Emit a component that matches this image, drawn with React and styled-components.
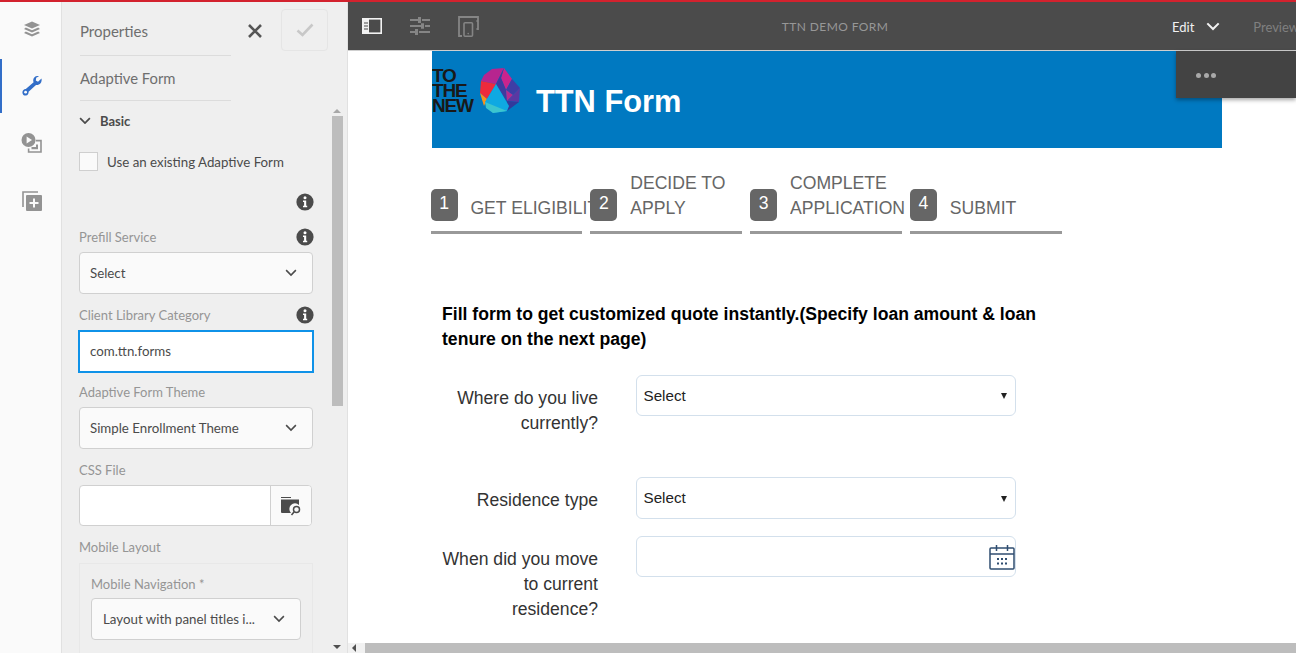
import React from "react";
import styled, { createGlobalStyle } from "styled-components";

const Global = createGlobalStyle`
  html, body { margin: 0; padding: 0; height: 100%; overflow: hidden; background: #fff; }
  * { box-sizing: border-box; }
`;

const UI = `Lato, "Open Sans", sans-serif`;
const FORM = `"Liberation Sans", Arial, sans-serif`;

const Page = styled.div`
  width: 1296px; height: 653px; display: flex; flex-direction: column; overflow: hidden;
  font-family: ${UI};
`;
const RedLine = styled.div`height: 2px; flex: none; background: #d3222e;`;
const Main = styled.div`flex: 1; min-height: 0; display: flex;`;

const Rail = styled.nav`
  width: 62px; flex: none; background: #fafafa; border-right: 1px solid #e1e1e1;
  display: flex; flex-direction: column; padding-top: 2px;
`;
const RailItem = styled.div`
  height: ${p => p.$h}px; margin-bottom: ${p => p.$gap || 0}px; display: flex; align-items: center; justify-content: center;
  border-left: 2px solid ${p => (p.$active ? "#326ec8" : "transparent")};
`;

const Panel = styled.aside`
  width: 286px; flex: none; background: #efefef; border-right: 1px solid #e1e1e1;
  display: flex; flex-direction: column; overflow: hidden;
`;
const PanelHead = styled.div`
  height: 54px; flex: none; margin-left: 18px; display: flex; align-items: center; position: relative;
`;
const PanelTitle = styled.div`
  width: 151px; height: 100%; border-bottom: 1px solid #dcdcdc; font-size: 15px; color: #6e6e6e;
  display: flex; align-items: center; padding-top: 4px;
`;
const CloseBtn = styled.div`width: 16px; height: 16px; margin-left: 16px; margin-top: 3px; display: flex;`;
const SaveBtn = styled.div`
  width: 47px; height: 42px; margin-left: 18px; margin-top: 2px; border: 1px solid #e5e5e5; border-radius: 4px;
  background: #efefef; display: flex; align-items: center; justify-content: center;
`;
const SubTitle = styled.div`
  width: 151px; height: 45px; margin-left: 18px; flex: none; border-bottom: 1px solid #dcdcdc;
  font-size: 14.8px; color: #6e6e6e; display: flex; align-items: center;
`;
const PanelBody = styled.div`flex: 1; min-height: 0; display: flex;`;
const Fields = styled.div`width: 269px; padding-left: 17px; flex: none; overflow: hidden;`;
const Section = styled.div`
  height: 39px; display: flex; align-items: center; gap: 9px; font-size: 13px; font-weight: 700; color: #4b4b4b;
`;
const CheckRow = styled.label`
  display: flex; align-items: center; gap: 9px; margin-top: 12px; font-size: 13.3px; color: #4b4b4b;
`;
const CheckBox = styled.span`
  width: 19px; height: 19px; background: #fafafa; border: 1px solid #cfcfcf; flex: none;
`;
const InfoRow = styled.div`
  display: flex; justify-content: flex-end; width: 235px; margin-top: 22px; height: 18px;
`;
const Label = styled.div`
  display: flex; justify-content: space-between; align-items: center; width: ${p => p.$w || 235}px;
  height: 18px; margin-top: ${p => p.$top || 0}px; font-size: 13px; color: #959595;
`;
const SelectBox = styled.div`
  width: ${p => p.$w || 234}px; height: 42px; margin-top: ${p => p.$mt ?? 6}px; padding: 0 15px 0 ${p => p.$pl || 10}px; background: #fafafa;
  border: 1px solid #d0d0d0; border-radius: 4px; display: flex; align-items: center; justify-content: space-between;
  font-size: 13.3px; color: #4b4b4b;
`;
const TextInput = styled.div`
  width: 236px; height: 43px; margin: 6px 0 0 -1px; padding: 0 10px 2px; background: #fff;
  border: 2px solid #0f92e8; font-size: 13.3px; color: #4b4b4b; display: flex; align-items: center;
`;
const FileRow = styled.div`
  width: 233px; height: 41px; margin-top: 6px; display: flex; border: 1px solid #d0d0d0; border-radius: 4px;
  background: #fff; overflow: hidden;
`;
const FileInput = styled.div`flex: 1;`;
const FileBtn = styled.div`
  width: 41px; background: #fafafa; border-left: 1px solid #d0d0d0;
  display: flex; align-items: center; justify-content: center;
`;
const Group = styled.div`
  width: 234px; margin-top: 7px; height: 92px; padding: 11px 11px 0; border: 1px solid #e8e8e8; background: #efefef;
`;
const ScrollTrack = styled.div`
  width: 12px; margin-left: 0; flex: none; display: flex; flex-direction: column; align-items: center;
`;
const ArrowUp = styled.div`
  width: 0; height: 0; margin-top: 8px; border: 4px solid transparent; border-top: 0; border-bottom: 4px solid #a8a8a8;
`;
const ScrollThumb = styled.div`width: 11px; height: 290px; margin-top: 3px; background: #bdbdbd;`;
const ScrollSpace = styled.div`flex: 1;`;
const ArrowDown = styled.div`
  width: 0; height: 0; margin-bottom: 4px; border: 4px solid transparent; border-bottom: 0; border-top: 4px solid #505050;
`;

const Workspace = styled.main`flex: 1; min-width: 0; display: flex; flex-direction: column; position: relative;`;
const Toolbar = styled.header`
  height: 49px; flex: none; background: #4b4b4b; border-bottom: 1px solid #cfcfcf; display: flex; align-items: center;
  font-size: 13px; white-space: nowrap; overflow: hidden;
`;
const ToolIcon = styled.div`width: ${p => p.$w}px; flex: none; display: flex; justify-content: center;`;
const ToolTitle = styled.div`
  width: 616px; flex: none; font-size: 12px; color: #979797; text-align: center; letter-spacing: .4px;
  padding-left: 66px; padding-top: 1px;
`;
const EditMode = styled.div`
  margin-left: 62px; color: #f2f2f2; display: flex; align-items: center; gap: 12px; flex: none; padding-top: 1px;
`;
const Preview = styled.div`margin-left: 33px; color: #808080; flex: none; padding-top: 1px;`;
const Flyout = styled.div`
  position: absolute; top: 49px; left: 828px; width: 120px; height: 47px; background: #434343; padding-top: 1px;
  box-shadow: 0 2px 4px rgba(0,0,0,.35); display: flex; align-items: center; gap: 2.5px; padding-left: 20px;
`;
const Dot = styled.span`width: 5px; height: 5px; border-radius: 50%; background: #a9a9a9;`;

const Viewport = styled.div`flex: 1; min-height: 0; overflow: hidden; padding-left: 84px; background: #fff; font-family: ${FORM};`;
const Banner = styled.div`
  width: 790px; height: 97px; background: #0079c1; display: flex; align-items: flex-start; overflow: hidden;
`;
const BrandText = styled.div`
  width: 40px; margin-top: 17px; font-size: 19px; font-weight: 700; line-height: 15px; letter-spacing: -1.2px;
  color: #191919; flex: none;
`;
const Mark = styled.svg`width: 42px; height: 45px; margin-top: 17px; margin-left: 7px; flex: none;`;
const BannerTitle = styled.h1`
  margin: 32px 0 0 15px; font-size: 30.8px; line-height: 37px; font-weight: 700; color: #fff;
`;
const Steps = styled.ol`
  list-style: none; margin: 25px 0 0 -1.4px; padding: 0; display: flex; gap: 8px; height: 61px;
`;
const Step = styled.li`
  width: 151.8px; height: 61px; border-bottom: 3px solid #999; display: flex; align-items: flex-end;
  padding-bottom: 10px; flex: none;
`;
const Num = styled.span`
  width: 27px; height: 32px; border-radius: 5px; background: #666; color: #fff; font-size: 17.6px; flex: none;
  display: flex; align-items: center; justify-content: center; padding-bottom: 3px;
`;
const StepText = styled.span`
  width: 120px; margin-left: 12.8px; flex: none; font-size: 17.6px; line-height: 25px; color: #666; overflow: hidden; white-space: nowrap;
`;
const Intro = styled.p`
  width: 610px; margin: 68px 0 0 10px; font-size: 17.6px; line-height: 25px; font-weight: 700; color: #000;
`;
const FormRow = styled.div`
  display: grid; grid-template-columns: 166px 380px; column-gap: 38px; margin-top: ${p => p.$top}px; height: ${p => p.$h}px;
`;
const RowLabel = styled.label`
  justify-self: end; width: 160px; padding-top: 11px; text-align: right; font-size: 17.6px; line-height: 25px; color: #333;
`;
const NativeSel = styled.div`
  height: ${p => p.$h || 41}px; padding: 0 9px 1px 6.5px; border: 1px solid #d3e0ec; border-radius: 6px; background: #fff;
  display: flex; align-items: center; justify-content: space-between; font-size: 15.2px; color: #222;
`;
const DateField = styled.div`
  height: 41px; padding: 7px 0 0 6.5px; border: 1px solid #d3e0ec; border-radius: 6px; background: #fff;
  display: flex; align-items: flex-start; justify-content: flex-end;
`;
const Caret = styled.span`
  width: 0; height: 0; border-left: 3px solid transparent; border-right: 3px solid transparent; border-top: 6px solid #222;
  margin-right: -1px; margin-top: 2px;
`;
const HScroll = styled.div`
  height: 10px; flex: none; background: #f1f1f1; display: flex; align-items: center; padding-left: 4px;
`;
const ArrowLeft = styled.div`
  width: 0; height: 0; border: 4px solid transparent; border-left: 0; border-right: 4px solid #505050; flex: none;
`;
const HThumb = styled.div`height: 100%; margin-left: 9px; flex: 1; background: #bdbdbd;`;

const Chevron = ({ size = 12, color = "#4b4b4b", width = 1.6 }) => (
  <svg width={size} height={size * 0.65} viewBox="0 0 12 8" fill="none">
    <path d="M1 1.2 L6 6.2 L11 1.2" stroke={color} strokeWidth={width} />
  </svg>
);
const Info = () => (
  <svg width="18" height="18" viewBox="0 0 18 18">
    <circle cx="9" cy="9" r="8.6" fill="#4b4b4b" />
    <circle cx="9" cy="4.8" r="1.5" fill="#fff" />
    <path d="M7 7.6h3.2v5.2h1v1.4H7v-1.4h1.1V9H7z" fill="#fff" />
  </svg>
);
const LayersIcon = () => (
  <svg width="18" height="17" viewBox="0 0 18 17" fill="#939393">
    <path d="M9 0.5 L17 4 L9 7.5 L1 4 Z" />
    <path d="M2.8 6.6 L9 9.3 L15.2 6.6 L17 7.9 L9 11.4 L1 7.9 Z" />
    <path d="M2.8 10.6 L9 13.3 L15.2 10.6 L17 11.9 L9 15.4 L1 11.9 Z" />
  </svg>
);
const WrenchIcon = () => (
  <svg width="22" height="22" viewBox="0 0 22 22" fill="none">
    <path d="M20.5 3.5 L17 6.8 L14.8 5.6 L15.2 2.8 L18 1.2 C15 .2 12.4 2 12.2 5 C12.2 6 12.3 6.6 12.6 7.2 L4.8 14 C3.4 13.8 1.4 15 1.4 17.4 C1.4 19.6 3.2 20.8 4.8 20.6 C6.8 20.4 7.8 18.6 7.6 16.8 L15 10 C18.6 10.4 21.4 7.4 20.5 3.5 Z" fill="#326ec8" />
    <circle cx="4.6" cy="17.2" r="1.4" fill="#fafafa" />
  </svg>
);
const PlayIcon = () => (
  <svg width="21" height="20" viewBox="0 0 21 20">
    <circle cx="7.5" cy="7" r="7" fill="#939393" />
    <path d="M5.6 3.6 L11 7 L5.6 10.4 Z" fill="#fafafa" />
    <path d="M14.8 7.6 H20 V19 H7.6 V15.6" fill="none" stroke="#939393" strokeWidth="1.6" />
    <path d="M10.5 16.2 H17 V11.5 L15 11.5 L15 14 L10.5 14 Z" fill="#939393" />
  </svg>
);
const AddIcon = () => (
  <svg width="20" height="20" viewBox="0 0 20 20">
    <path d="M1 16 V1 H16" fill="none" stroke="#939393" strokeWidth="1.6" />
    <rect x="4" y="4" width="16" height="16" rx="1" fill="#939393" />
    <path d="M11 7.5 h2 v3.5 h3.5 v2 H13 v3.5 h-2 V13 H7.5 v-2 H11z" fill="#fafafa" />
  </svg>
);
const CloseIcon = () => (
  <svg width="16" height="16" viewBox="0 0 16 16">
    <path d="M2 2 L14 14 M14 2 L2 14" stroke="#555" strokeWidth="2.6" />
  </svg>
);
const CheckIcon = () => (
  <svg width="18" height="14" viewBox="0 0 18 14" fill="none">
    <path d="M1.5 7.5 L6.5 12 L16.5 1.5" stroke="#c8c8c8" strokeWidth="2.6" />
  </svg>
);
const BrowseIcon = () => (
  <svg width="22" height="20" viewBox="0 0 22 20">
    <path d="M1 1 H11 V2 H1z" fill="#4b4b4b" />
    <path d="M1 3.5 H19 V9 A5.5 5.5 0 0 0 11 17 H2 A1 1 0 0 1 1 16Z" fill="#4b4b4b" />
    <circle cx="16.5" cy="13.5" r="3" fill="none" stroke="#4b4b4b" strokeWidth="1.5" />
    <path d="M14 16 L11.5 19" stroke="#4b4b4b" strokeWidth="1.6" />
  </svg>
);
const SidebarIcon = () => (
  <svg width="20" height="16" viewBox="0 0 20 16">
    <rect x=".8" y=".8" width="18.4" height="14.4" fill="none" stroke="#f2f2f2" strokeWidth="1.6" />
    <rect x="1" y="1" width="6" height="14" fill="#f2f2f2" />
    <path d="M2 5h4M2 8h4M2 11h4" stroke="#4b4b4b" strokeWidth="1" />
  </svg>
);
const SlidersIcon = () => (
  <svg width="20" height="18" viewBox="0 0 20 18" fill="#858585">
    <path d="M0 2h8v2H0zM12 2h8v2h-8zM8 0h3v6H8z" />
    <path d="M0 8h11v2H0zM15 8h5v2h-5zM11 6.2h3v5.6h-3z" />
    <path d="M0 14h5v2H0zM9 14h11v2H9zM5 12h3v6H5z" />
  </svg>
);
const DeviceIcon = () => (
  <svg width="21" height="21" viewBox="0 0 21 21" fill="none" stroke="#858585">
    <path d="M4 20 H1 V1 H20 V13 H18.5" strokeWidth="1.8" />
    <path d="M18.5 5 H20" strokeWidth="1.8" />
    <rect x="6" y="6.8" width="8.5" height="13.4" rx="1" strokeWidth="1.6" />
    <circle cx="10.2" cy="17.6" r=".8" fill="#858585" stroke="none" />
  </svg>
);
const CalendarIcon = () => (
  <svg width="26" height="26" viewBox="0 0 26 26" fill="none">
    <rect x="1" y="4" width="24" height="21" rx="1" stroke="#2f4d70" strokeWidth="1.5" />
    <path d="M1 10 H25" stroke="#2f4d70" strokeWidth="1.5" />
    <path d="M7.5 1 V7 M18.5 1 V7" stroke="#2f4d70" strokeWidth="1.5" />
    <path d="M8 14h2v2H8zM12 14h2v2h-2zM16 14h2v2h-2zM8 18.5h2v2H8zM12 18.5h2v2h-2zM16 18.5h2v2h-2z" fill="#2f4d70" />
  </svg>
);
const LogoMark = () => (
  <Mark viewBox="0 0 42 45">
    <path d="M5 7 L13 1 L25 0 L17 16 L2 13 Z" fill="#b7258f" />
    <path d="M25 0 L33 11 L27 22 L22 10 Z" fill="#c9248d" />
    <path d="M25 0 L17 16 L28 34 L27 22 L22 10Z" fill="#3f3a9f" />
    <path d="M33 11 L41 20 L34 27 L27 22 Z" fill="#3e3ea6" />
    <path d="M27 22 L34 27 L28 33 Z" fill="#b42a92" />
    <path d="M41 20 L40 34 L28 33 L34 27 Z" fill="#5b38a2" />
    <path d="M40 34 L28 43 L28 33 Z" fill="#32399b" />
    <path d="M2 13 L17 16 L8 31 L1 25 Z" fill="#ee2a3c" />
    <path d="M1 25 L8 31 L5 38 Z" fill="#f7941d" />
    <path d="M17 16 L30 38 L28 43 L14 45 L6 34 Z" fill="#0fa9e2" />
    <path d="M6 34 L28 43 L14 45 L7 40 Z" fill="#3cc5cf" />
  </Mark>
);

export default function App() {
  return (
    <Page>
      <Global />
      <RedLine />
      <Main>
        <Rail>
          <RailItem $h={50} $gap={5}><LayersIcon /></RailItem>
          <RailItem $h={54} $active><WrenchIcon /></RailItem>
          <RailItem $h={60}><PlayIcon /></RailItem>
          <RailItem $h={56}><AddIcon /></RailItem>
        </Rail>
        <Panel>
          <PanelHead>
            <PanelTitle>Properties</PanelTitle>
            <CloseBtn><CloseIcon /></CloseBtn>
            <SaveBtn><CheckIcon /></SaveBtn>
          </PanelHead>
          <SubTitle>Adaptive Form</SubTitle>
          <PanelBody>
            <Fields>
              <Section><Chevron size={12} width={1.8} />Basic</Section>
              <CheckRow><CheckBox />Use an existing Adaptive Form</CheckRow>
              <InfoRow><Info /></InfoRow>
              <Label $top={17}>Prefill Service<Info /></Label>
              <SelectBox>Select<Chevron /></SelectBox>
              <Label $top={12}>Client Library Category<Info /></Label>
              <TextInput>com.ttn.forms</TextInput>
              <Label $top={10}>Adaptive Form Theme</Label>
              <SelectBox>Simple Enrollment Theme<Chevron /></SelectBox>
              <Label $top={12}>CSS File</Label>
              <FileRow><FileInput /><FileBtn><BrowseIcon /></FileBtn></FileRow>
              <Label $top={12}>Mobile Layout</Label>
              <Group>
                <Label $w={210}>Mobile Navigation *</Label>
                <SelectBox $w={210} $mt={5} $pl={11}>Layout with panel titles i...<Chevron /></SelectBox>
              </Group>
            </Fields>
            <ScrollTrack>
              <ArrowUp />
              <ScrollThumb />
              <ScrollSpace />
              <ArrowDown />
            </ScrollTrack>
          </PanelBody>
        </Panel>
        <Workspace>
          <Toolbar>
            <ToolIcon $w={48}><SidebarIcon /></ToolIcon>
            <ToolIcon $w={47}><SlidersIcon /></ToolIcon>
            <ToolIcon $w={51}><DeviceIcon /></ToolIcon>
            <ToolTitle>TTN DEMO FORM</ToolTitle>
            <EditMode>Edit<Chevron size={14} color="#f2f2f2" width={1.8} /></EditMode>
            <Preview>Preview</Preview>
          </Toolbar>
          <Flyout><Dot /><Dot /><Dot /></Flyout>
          <Viewport>
            <Banner>
              <BrandText>TO THE NEW</BrandText>
              <LogoMark />
              <BannerTitle>TTN Form</BannerTitle>
            </Banner>
            <Steps>
              <Step><Num>1</Num><StepText>GET ELIGIBILITY</StepText></Step>
              <Step><Num>2</Num><StepText>DECIDE TO<br />APPLY</StepText></Step>
              <Step><Num>3</Num><StepText>COMPLETE<br />APPLICATION</StepText></Step>
              <Step><Num>4</Num><StepText>SUBMIT</StepText></Step>
            </Steps>
            <Intro>Fill form to get customized quote instantly.(Specify loan amount &amp; loan tenure on the next page)</Intro>
            <FormRow $top={23} $h={102}>
              <RowLabel>Where do you live currently?</RowLabel>
              <NativeSel>Select<Caret /></NativeSel>
            </FormRow>
            <FormRow $top={0} $h={59}>
              <RowLabel>Residence type</RowLabel>
              <NativeSel $h={42}>Select<Caret /></NativeSel>
            </FormRow>
            <FormRow $top={0} $h={90}>
              <RowLabel>When did you move to current residence?</RowLabel>
              <DateField><CalendarIcon /></DateField>
            </FormRow>
          </Viewport>
          <HScroll><ArrowLeft /><HThumb /></HScroll>
        </Workspace>
      </Main>
    </Page>
  );
}
